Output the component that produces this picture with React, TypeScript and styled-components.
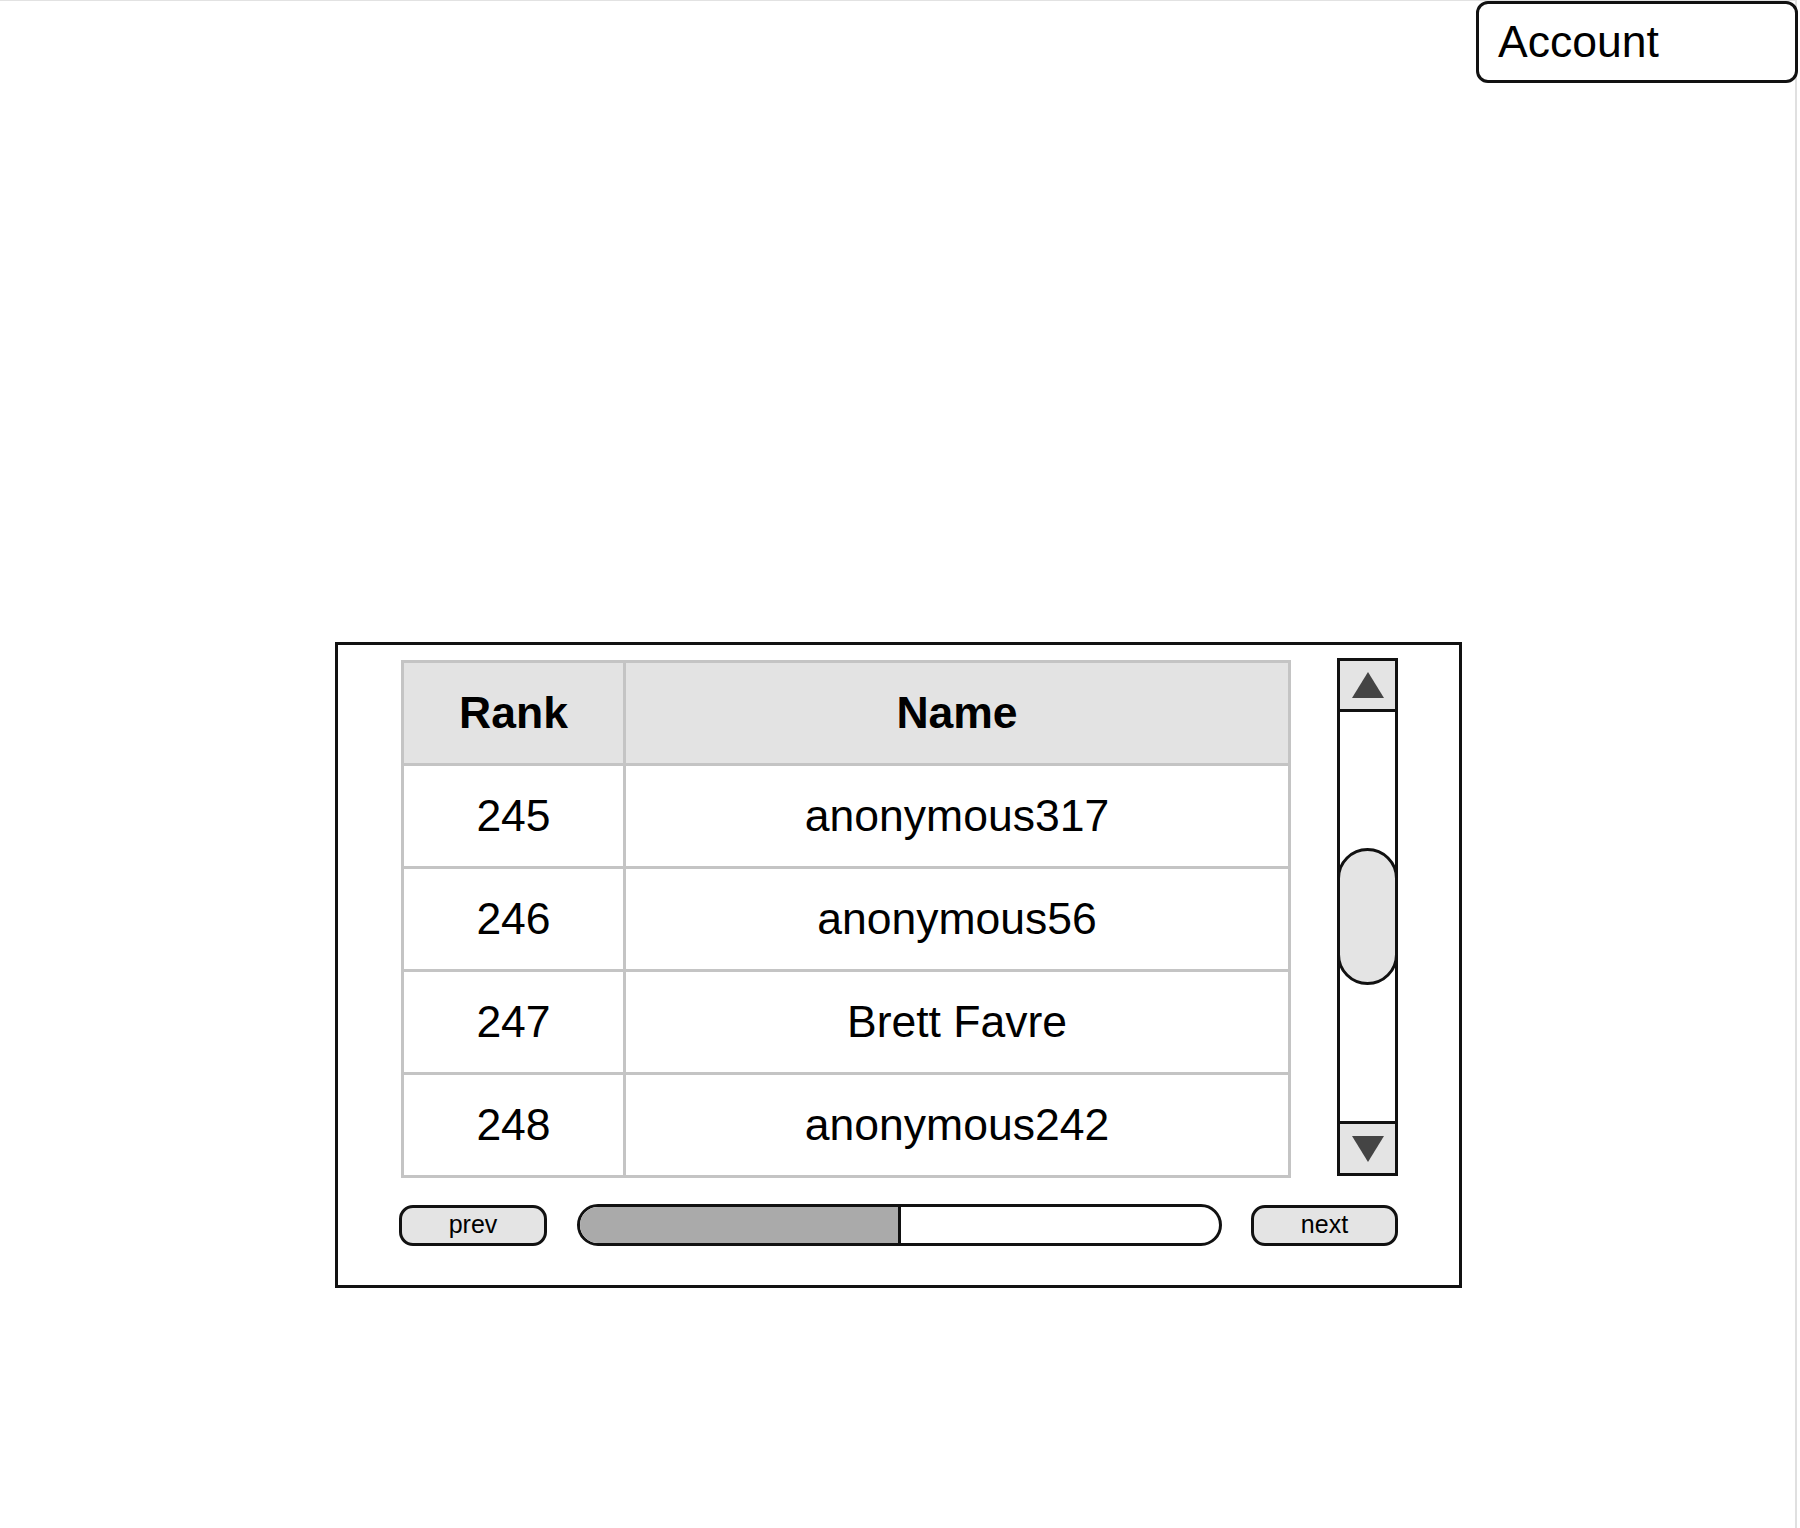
import React from "react";
import styled, { createGlobalStyle } from "styled-components";

const GlobalStyle = createGlobalStyle`
  * { box-sizing: border-box; }
  html, body { margin: 0; padding: 0; background: #ffffff; }
  body { font-family: "Liberation Sans", Arial, Helvetica, sans-serif; color: #000; }
`;

const Page = styled.div`
  width: 1797px;
  min-height: 1528px;
  border-top: 1px solid #e2e2e2;
  border-right: 2px solid #e0e0e0;
  display: flex;
  flex-direction: column;
`;

const Header = styled.header`
  display: flex;
  justify-content: flex-end;
  margin-right: -3px;
`;

const AccountButton = styled.div`
  width: 322px;
  height: 82px;
  border: 3px solid #111;
  border-radius: 12px;
  padding-left: 19px;
  display: flex;
  align-items: center;
  font-size: 44.5px;
  background: #fff;
`;

const Panel = styled.section`
  margin-left: 335px;
  margin-top: 559px;
  width: 1127px;
  height: 646px;
  border: 3px solid #111;
  padding: 13px 61px 0 61px;
  display: flex;
  flex-direction: column;
`;

const TopSection = styled.div`
  display: flex;
  align-items: flex-start;
  justify-content: space-between;
`;

const Grid = styled.div`
  margin-top: 2px;
  margin-left: 2px;
  display: grid;
  grid-template-columns: 219px 662px;
  grid-auto-rows: 100px;
  gap: 3px;
  padding: 3px;
  background: #c4c4c4;
`;

const Cell = styled.div<{ $head?: boolean }>`
  background: ${(p) => (p.$head ? "#e3e3e3" : "#ffffff")};
  display: flex;
  align-items: center;
  justify-content: center;
  font-size: 44.5px;
  font-weight: ${(p) => (p.$head ? 700 : 400)};
  color: #000;
`;

const ScrollBar = styled.div`
  width: 61px;
  height: 518px;
  border: 3px solid #111;
  display: flex;
  flex-direction: column;
`;

const ArrowButton = styled.div<{ $bottom?: boolean }>`
  height: ${(p) => (p.$bottom ? "52px" : "51px")};
  background: #e4e4e4;
  ${(p) => (p.$bottom ? "border-top: 3px solid #111;" : "border-bottom: 3px solid #111;")}
  display: flex;
  align-items: center;
  justify-content: center;
`;

const Track = styled.div`
  flex: 1;
  display: flex;
  flex-direction: column;
  padding-top: 136px;
`;

const Thumb = styled.div`
  margin: 0 -3px;
  height: 137px;
  border: 3px solid #111;
  border-radius: 31px;
  background: #e4e4e4;
`;

const BottomRow = styled.div`
  margin-top: 26px;
  display: flex;
  align-items: center;
  justify-content: space-between;
  height: 42px;
`;

const PageButton = styled.div<{ $w: number }>`
  width: ${(p) => p.$w}px;
  height: 41px;
  border: 3px solid #111;
  border-radius: 14px;
  background: #e4e4e4;
  display: flex;
  align-items: center;
  justify-content: center;
  font-size: 25px;
  padding-bottom: 2px;
`;

const ProgressBar = styled.div`
  width: 645px;
  height: 42px;
  border: 3px solid #111;
  border-radius: 21px;
  overflow: hidden;
  display: flex;
  background: #fff;
`;

const ProgressFill = styled.div`
  height: 100%;
  background: #aaaaaa;
  border-right: 3px solid #111;
`;

const rows = [
  { rank: 245, name: "anonymous317" },
  { rank: 246, name: "anonymous56" },
  { rank: 247, name: "Brett Favre" },
  { rank: 248, name: "anonymous242" },
];

const Triangle = ({ up }: { up?: boolean }) => (
  <svg width="32" height="26" viewBox="0 0 32 26">
    <polygon points={up ? "16,0 32,26 0,26" : "0,0 32,0 16,26"} fill="#444" />
  </svg>
);

export default function App() {
  const progress = 0.5;
  return (
    <>
      <GlobalStyle />
      <Page>
        <Header>
          <AccountButton>Account</AccountButton>
        </Header>
        <Panel>
          <TopSection>
            <Grid>
              <Cell $head>Rank</Cell>
              <Cell $head>Name</Cell>
              {rows.map((r) => (
                <React.Fragment key={r.rank}>
                  <Cell>{r.rank}</Cell>
                  <Cell>{r.name}</Cell>
                </React.Fragment>
              ))}
            </Grid>
            <ScrollBar>
              <ArrowButton>
                <Triangle up />
              </ArrowButton>
              <Track>
                <Thumb />
              </Track>
              <ArrowButton $bottom>
                <Triangle />
              </ArrowButton>
            </ScrollBar>
          </TopSection>
          <BottomRow>
            <PageButton $w={148}>prev</PageButton>
            <ProgressBar>
              <ProgressFill style={{ width: `calc(${progress * 100}% + 2px)` }} />
            </ProgressBar>
            <PageButton $w={147}>next</PageButton>
          </BottomRow>
        </Panel>
      </Page>
    </>
  );
}
